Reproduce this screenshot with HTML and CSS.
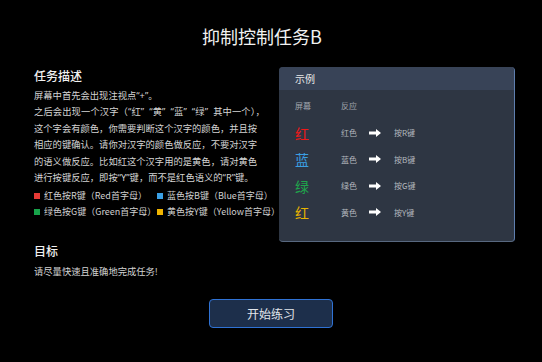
FILE: index.html
```html
<!DOCTYPE html>
<html lang="zh-CN">
<head>
<meta charset="utf-8">
<title>抑制控制任务B</title>
<link rel="stylesheet" href="styles.css">
</head>
<body>
<div class="page">
  <h1 class="title">抑制控制任务B</h1>
  <div class="main">
    <section class="desc">
      <h2 class="sec-title">任务描述</h2>
      <p class="para">
        <span class="line">屏幕中首先会出现注视点“+”。</span>
        <span class="line line-wide">之后会出现一个汉字（“红” “黄” “蓝” “绿” 其中一个），</span>
        <span class="line">这个字会有颜色，你需要判断这个汉字的颜色，并且按</span>
        <span class="line">相应的键确认。请你对汉字的颜色做反应，不要对汉字</span>
        <span class="line">的语义做反应。比如红这个汉字用的是黄色，请对黄色</span>
        <span class="line">进行按键反应，即按“Y”键，而不是红色语义的“R”键。</span>
      </p>
      <div class="legend">
        <div class="legend-item"><span class="sq sq-red"></span>红色按R键（Red首字母）</div>
        <div class="legend-item"><span class="sq sq-blue"></span>蓝色按B键（Blue首字母）</div>
        <div class="legend-item"><span class="sq sq-green"></span>绿色按G键（Green首字母）</div>
        <div class="legend-item"><span class="sq sq-yellow"></span>黄色按Y键（Yellow首字母）</div>
      </div>
    </section>
    <section class="panel">
      <div class="panel-head">示例</div>
      <div class="panel-body">
        <div class="cols">
          <span class="c1">屏幕</span>
          <span class="c2">反应</span>
        </div>
        <div class="rows">
          <div class="row">
            <span class="c1 big red">红</span>
            <span class="c2">红色</span>
            <span class="c3"><svg class="arrow" viewBox="0 0 12 8" width="12" height="8"><path d="M0 2.4h7V0l5 4-5 4V5.6H0z" fill="#fff"/></svg></span>
            <span class="c4">按R键</span>
          </div>
          <div class="row">
            <span class="c1 big blue">蓝</span>
            <span class="c2">蓝色</span>
            <span class="c3"><svg class="arrow" viewBox="0 0 12 8" width="12" height="8"><path d="M0 2.4h7V0l5 4-5 4V5.6H0z" fill="#fff"/></svg></span>
            <span class="c4">按B键</span>
          </div>
          <div class="row">
            <span class="c1 big green">绿</span>
            <span class="c2">绿色</span>
            <span class="c3"><svg class="arrow" viewBox="0 0 12 8" width="12" height="8"><path d="M0 2.4h7V0l5 4-5 4V5.6H0z" fill="#fff"/></svg></span>
            <span class="c4">按G键</span>
          </div>
          <div class="row">
            <span class="c1 big yellow">红</span>
            <span class="c2">黄色</span>
            <span class="c3"><svg class="arrow" viewBox="0 0 12 8" width="12" height="8"><path d="M0 2.4h7V0l5 4-5 4V5.6H0z" fill="#fff"/></svg></span>
            <span class="c4">按Y键</span>
          </div>
        </div>
      </div>
    </section>
  </div>
  <section class="goal">
    <h2 class="sec-title">目标</h2>
    <p class="goal-text">请尽量快速且准确地完成任务!</p>
  </section>
  <div class="actions">
    <button class="start-btn" type="button">开始练习</button>
  </div>
</div>
</body>
</html>
```

FILE: styles.css
```css
html, body {
  margin: 0;
  padding: 0;
  background: #000;
}
body {
  width: 542px;
  height: 362px;
  overflow: hidden;
  font-family: "Noto Sans CJK SC", "Noto Sans", sans-serif;
  color: #d6d6d6;
}
.page {
  display: flex;
  flex-direction: column;
}
.title {
  margin: 0;
  padding: 24px 18px 0 0;
  height: 24px;
  line-height: 24px;
  font-size: 18px;
  font-weight: 400;
  color: #f2f2f2;
  text-align: center;
}
.main {
  margin-top: 19px;
  padding-left: 34px;
  display: grid;
  grid-template-columns: 236px 236px;
  column-gap: 9px;
}
.sec-title {
  margin: 0;
  font-size: 12px;
  line-height: 18px;
  font-weight: 500;
  color: #f0f0f0;
}
.para {
  margin: 3px 0 0;
  font-family: "Noto Sans", "Noto Sans CJK SC", sans-serif;
  font-size: 9.3px;
  line-height: 16.4px;
  color: #d4d4d4;
}
.line {
  display: block;
  white-space: nowrap;
}
.line-wide {
  word-spacing: 2.5px;
  letter-spacing: 0.1px;
}
.legend {
  margin-top: 2px;
  display: grid;
  grid-template-columns: 123px auto;
  font-size: 9px;
  line-height: 15.6px;
  color: #d0d0d0;
  white-space: nowrap;
}
.legend-item {
  display: flex;
  align-items: center;
}
.sq {
  width: 6px;
  height: 6px;
  margin-right: 4px;
  flex: none;
}
.sq-red { background: #e53935; }
.sq-blue { background: #3aa0e6; }
.sq-green { background: #17a34a; }
.sq-yellow { background: #f0b400; }

.panel {
  height: 175px;
  box-sizing: border-box;
  border-radius: 4px;
  background: #2e3643;
  border-right: 1px solid #5e7eae;
  border-bottom: 1px solid #58687f;
  overflow: hidden;
  display: flex;
  flex-direction: column;
}
.panel-head {
  height: 23px;
  line-height: 23px;
  padding-left: 16px;
  background: #384357;
  font-size: 10px;
  color: #e8e8e8;
  flex: none;
}
.panel-body {
  padding: 8px 16px 0;
  font-size: 8px;
  color: #b4b8be;
}
.cols, .row {
  display: grid;
  grid-template-columns: 46px 28px 25px auto;
  align-items: center;
}
.cols {
  height: 14px;
  color: #a0a5ad;
}
.cols .c1 { grid-column: 1; }
.cols .c2 { grid-column: 2; }
.rows {
  margin-top: 7.4px;
}
.row {
  height: 26.6px;
}
.big {
  font-size: 14px;
  line-height: 16px;
}
.red { color: #f01818; }
.blue { color: #3a9fe2; }
.green { color: #1fa54c; }
.yellow { color: #e8b400; }
.c3 {
  display: flex;
  align-items: center;
}
.arrow {
  display: block;
}
.goal {
  padding-left: 34px;
}
.goal-text {
  margin: 3px 0 0;
  font-size: 9.3px;
  line-height: 16px;
  color: #d4d4d4;
}
.actions {
  margin-top: 20px;
  display: flex;
  justify-content: center;
}
.start-btn {
  width: 124px;
  height: 29px;
  box-sizing: border-box;
  border: 1px solid #2f72d4;
  border-radius: 4px;
  background: #1d2f4b;
  color: #e2e6ec;
  font-family: "Noto Sans CJK SC", "Noto Sans", sans-serif;
  font-size: 12px;
  padding: 0;
}
```
